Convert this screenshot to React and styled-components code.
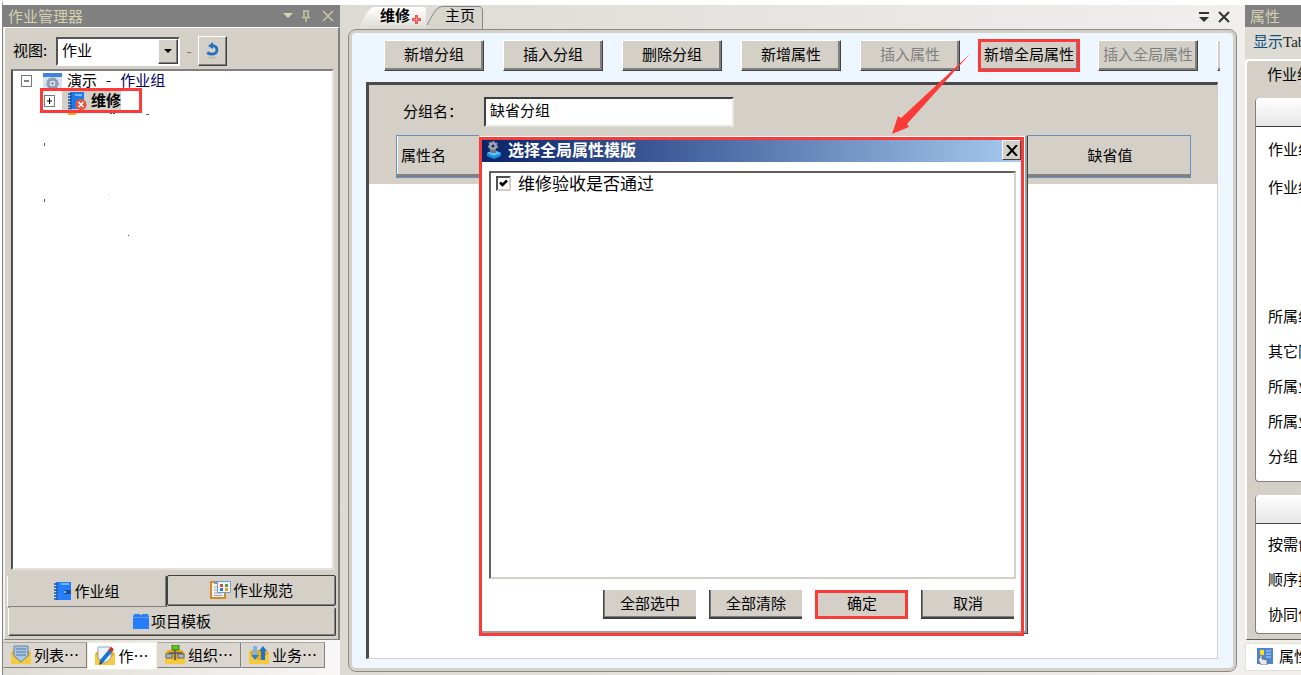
import React from 'react'
import styled, { createGlobalStyle } from 'styled-components'

function App() {
  return (
    <>
    <GlobalStyle />
    <Page lang="zh-CN">
      <Sidebar>
        <PanelTitle>
          <span>作业管理器</span>
          <TitleIcons />
        </PanelTitle>
        <SideBody>
          <ViewRow>
            <label htmlFor="view">视图:</label>
            <Combo>
              <select id="view" defaultValue="job">
                <option value="job">作业</option>
              </select>
              <ComboArrow>
                <svg width="8" height="4"><path d="M0 0h8L4 4z" fill="#000" /></svg>
              </ComboArrow>
            </Combo>
            <Dash>-</Dash>
            <RefreshButton aria-label="刷新">
              <svg width="15" height="18" viewBox="0 0 15 18">
                <path d="M7 3.6C10.500 3.500 12.300 5.800 11.900 8.600C11.400 12 6.500 13.500 2.200 10.500" fill="none" stroke="#2271c3" strokeWidth="2.800" />
                <path d="M3 4L8 0v7z" fill="#2271c3" />
                <ellipse cx="7" cy="15.500" rx="5" ry="1" fill="#bdbbb6" />
              </svg>
            </RefreshButton>
          </ViewRow>
          <Tree>
            <Marks />
            <TreeRow>
              <Expander open />
              <RootIcon />
              <RootLabel>
                <span>演示</span>
                <span>-</span>
                <Navy>作业组</Navy>
              </RootLabel>
            </TreeRow>
            <TreeRow $child>
              <Expander />
              <Selected>
                <BookErrorIcon />
                <b>维修</b>
              </Selected>
            </TreeRow>
          </Tree>
          <ModeTabs>
            <ModeTab $active><BookIcon />作业组</ModeTab>
            <ModeTab><SpecIcon />作业规范</ModeTab>
          </ModeTabs>
          <ModeTab $wide><BoxIcon />项目模板</ModeTab>
        </SideBody>
        <DockTabs>
          <DockTab $w={84}><EnvelopeIcon kind="list" />列表…</DockTab>
          <DockTab $w={70} $active><EnvelopeIcon kind="pen" />作…</DockTab>
          <DockTab $w={84}><EnvelopeIcon kind="org" />组织…</DockTab>
          <DockTab $w={84}><EnvelopeIcon kind="flow" />业务…</DockTab>
        </DockTabs>
      </Sidebar>

      <Main>
        <PageTabs>
          <TabShapes />
          <PageTab $active>维修<RedPlus /></PageTab>
          <PageTab>主页</PageTab>
          <WindowTools>
            <IconButton aria-label="标签列表">
              <svg width="10" height="11"><path d="M0 0h10v2H0zM0 5h10L5 10z" fill="#333" /></svg>
            </IconButton>
            <IconButton aria-label="关闭标签">
              <svg width="12" height="12"><path d="M1 1L11 11M11 1L1 11" stroke="#333" strokeWidth="2" /></svg>
            </IconButton>
          </WindowTools>
        </PageTabs>
        <Frame>
          <Toolbar>
            <ToolButton>新增分组</ToolButton>
            <ToolButton>插入分组</ToolButton>
            <ToolButton>删除分组</ToolButton>
            <ToolButton>新增属性</ToolButton>
            <ToolButton disabled>插入属性</ToolButton>
            <ToolButton $marked>新增全局属性</ToolButton>
            <ToolButton disabled>插入全局属性</ToolButton>
            <ToolButton aria-label="更多" />
          </Toolbar>
          <Editor>
            <GroupForm>
              <NameRow>
                <label htmlFor="group">分组名：</label>
                <input id="group" defaultValue="缺省分组" />
              </NameRow>
              <AttrTable>
                <thead>
                  <tr>
                    <th>属性名</th>
                    <th>缺省值</th>
                  </tr>
                </thead>
              </AttrTable>
            </GroupForm>
            <Dialog role="dialog" aria-labelledby="dialog-title">
              <DialogTitle>
                <GearUserIcon />
                <h2 id="dialog-title">选择全局属性模版</h2>
                <CloseButton aria-label="关闭">
                  <svg width="12" height="11"><path d="M1 0L11 11M11 0L1 11" stroke="#000" strokeWidth="2" /></svg>
                </CloseButton>
              </DialogTitle>
              <CheckList>
                <CheckItem>
                  <Check>
                    <input type="checkbox" defaultChecked />
                    <svg width="11" height="11"><path d="M2 4.500L4.500 7L9 2.500" fill="none" stroke="#000" strokeWidth="2.500" /></svg>
                  </Check>
                  维修验收是否通过
                </CheckItem>
              </CheckList>
              <DialogButtons>
                <DialogButton>全部选中</DialogButton>
                <DialogButton>全部清除</DialogButton>
                <DialogButton $marked>确定</DialogButton>
                <DialogButton>取消</DialogButton>
              </DialogButtons>
            </Dialog>
            <Arrow width="78" height="80" viewBox="892 54 78 80">
              <path d="M892 134L898 116L901 118L970 54L907 124L909 127Z" fill="#fc3a38" />
            </Arrow>
          </Editor>
        </Frame>
      </Main>

      <Properties>
        <PanelTitle><span>属性</span></PanelTitle>
        <ShowTab><span>显示</span>Tab</ShowTab>
        <PropBody>
          <PropHead>作业组</PropHead>
          <PropGroup $grow>
            <GroupBar />
            <Field $h={38}>作业组</Field>
            <Field $h={38} $grow>作业组</Field>
            <Field>所属组</Field>
            <Field>其它限制</Field>
            <Field>所属业务</Field>
            <Field>所属业务</Field>
            <Field>分组</Field>
          </PropGroup>
          <PropGroup>
            <GroupBar />
            <Field>按需创建</Field>
            <Field>顺序执行</Field>
            <Field>协同作业</Field>
          </PropGroup>
        </PropBody>
        <PropTab><PropIcon />属性</PropTab>
      </Properties>
    </Page>
    </>
  )
}

export default App

function TitleIcons() {
  return (
    <svg width="52" height="14" viewBox="0 0 52 14">
      <path d="M0 4h10L5 9z" fill="#d8d3b4" />
      <path d="M20 2h6M21 2v6M25 2v6M19 8.500h8M23 9v4" fill="none" stroke="#c9c4a4" strokeWidth="1.500" />
      <path d="M40 2L50 12M50 2L40 12" stroke="#c9c4a4" strokeWidth="1.500" />
    </svg>
  )
}

function Expander({ open }) {
  return (
    <svg width="11" height="12" viewBox="0 0 11 12">
      <rect x=".5" y=".5" width="10" height="11" fill="#fff" stroke="#777" />
      <path d="M3 6h5" stroke="#000" />
      {!open && <path d="M5.500 3v6" stroke="#000" />}
    </svg>
  )
}

function RootIcon() {
  return (
    <svg width="19" height="17" viewBox="0 0 19 17">
      <path d="M0 0h19v17H0z" fill="#d5e3f1" />
      <path d="M0 0h19v4H0z" fill="#3f83dd" />
      <circle cx="9.500" cy="10.500" r="5.500" fill="#8c9fb3" stroke="#8c9fb3" strokeWidth="1.500" strokeDasharray="2 1" />
      <circle cx="9.500" cy="10.500" r="2.800" fill="#e9f1f8" />
      <path d="M7.500 10.500h4M9.500 8.500v4" stroke="#7d93aa" />
    </svg>
  )
}

function BookIcon() {
  return (
    <svg width="18" height="18" viewBox="0 0 18 18">
      <path d="M2 0h15v18H2z" fill="#257dfc" />
      <path d="M0 2h4M0 5h4M0 8h4M0 11h4M0 14h4M0 17h4" stroke="#1b559f" strokeWidth="1.500" />
      <path d="M7 1h8v2H7z" fill="#79b2ff" />
      <path d="M10 8h7v4h-7z" fill="#1a4f99" />
      <circle cx="11" cy="10" r="1" fill="#b7d6ff" />
    </svg>
  )
}

function BookErrorIcon() {
  return (
    <svg width="20" height="18" viewBox="0 0 20 18">
      <path d="M3 0h14v17H3z" fill="#1e7ae8" />
      <path d="M1 2h4M1 5h4M1 8h4M1 11h4M1 14h4M1 16.500h4" stroke="#174f94" strokeWidth="1.500" />
      <path d="M8 2h7v2H8z" fill="#7eb8f7" />
      <circle cx="14" cy="12.500" r="5.500" fill="#e8573f" />
      <path d="M11.500 10l5 5M16.500 10l-5 5" stroke="#fff" strokeWidth="1.500" />
    </svg>
  )
}

function SpecIcon() {
  return (
    <svg width="21" height="19" viewBox="0 0 21 19">
      <path d="M1 2h14v16H1z" fill="#f4f1e8" stroke="#d28a2d" strokeWidth="2" />
      <path d="M4 1h7v3H4z" fill="#8b98a5" />
      <path d="M4 7h3M4 10h3M4 13h8M4 15.500h8" stroke="#9aa6b3" />
      <path d="M7.500 1.500h13v11h-13z" fill="#eef4fa" stroke="#6f9fce" />
      <path d="M10 4h3v3h-3z" fill="#c8503a" />
      <path d="M15 4h3v3h-3z" fill="#52a32f" />
      <path d="M10 8h3v3h-3z" fill="#2f74cf" />
      <path d="M15 8h3v3h-3z" fill="#e4a21d" />
    </svg>
  )
}

function BoxIcon() {
  return (
    <svg width="16" height="16" viewBox="0 0 16 16">
      <path d="M0 3L1.500 1h5l1 1h1l1-1h5L16 3v13H0z" fill="#257dfc" />
      <path d="M0 4.500h16" stroke="#5c9dfb" />
    </svg>
  )
}

function EnvelopeIcon({ kind }) {
  return (
    <svg width="20" height="20" viewBox="0 0 20 20">
      <path d="M0 8l3-3h14l3 3v11H0z" fill="#e9ab17" />
      <path d="M0 8l10 8L20 8v11H0z" fill="#f7c93c" />
      {kind === 'list' && (
        <g>
          <path d="M3 1h14v10l-7 6l-7-6z" fill="#a9c6e2" stroke="#6584a5" />
          <path d="M5 4h10M5 7h10M5 10h10" stroke="#52769c" />
        </g>
      )}
      {kind === 'pen' && (
        <g>
          <path d="M3 1h13v11l-6 5l-7-5z" fill="#eef3f8" stroke="#8ba3bb" />
          <path d="M6 16L16 4" stroke="#1876d2" strokeWidth="4" />
          <path d="M15 5l2.500-3" stroke="#d6341f" strokeWidth="4" />
          <path d="M4 19l1-4l3 2z" fill="#274b70" />
        </g>
      )}
      {kind === 'org' && (
        <g>
          <path d="M7 0h7v5H7z" fill="#65c51f" stroke="#3b7b14" />
          <path d="M10 5v10M4 8h13M4 8v3M17 8v3" stroke="#4c5560" strokeWidth="1.500" />
          <path d="M1 9h6v4H1zM13 9h6v4h-6z" fill="#a9b8c6" stroke="#596878" />
        </g>
      )}
      {kind === 'flow' && (
        <g>
          <path d="M6 1v10" stroke="#78b6ea" strokeWidth="4" />
          <path d="M2 10h8l-4 5z" fill="#2b83d2" />
          <path d="M14 15V6" stroke="#1d74c9" strokeWidth="4" />
          <path d="M10 6h8l-4-5z" fill="#1d74c9" />
        </g>
      )}
    </svg>
  )
}

function PropIcon() {
  return (
    <svg width="16" height="17" viewBox="0 0 16 17">
      <path d="M0 0h16v16H0z" fill="#4c86d1" />
      <path d="M9 3h5M9 6h5M9 9h5" stroke="#b8d5f5" />
      <path d="M3 2h4v5H3z" fill="#ffe21f" />
      <path d="M4 17l-3-6l2-1V7h2v4l5 1v5z" fill="#e8e8e8" stroke="#5b6270" strokeWidth=".7" />
    </svg>
  )
}

function GearUserIcon() {
  return (
    <svg width="16" height="18" viewBox="0 0 16 18">
      <path d="M1 12l7-3l7 3v3l-7 3l-7-3z" fill="#188fdc" />
      <path d="M1 12l7-3l7 3l-7 3z" fill="#5cc3f6" />
      <circle cx="7" cy="5" r="2.800" fill="none" stroke="#a2a6ac" strokeWidth="2.500" />
      <circle cx="7" cy="5" r="4.500" fill="none" stroke="#8e939b" strokeWidth="1.500" strokeDasharray="2 2" />
      <path d="M5 9h5v3H5z" fill="#6f7680" />
    </svg>
  )
}

function RedPlus() {
  return (
    <svg width="9" height="9" viewBox="0 0 9 9">
      <path d="M3 0h3v3h3v3H6v3H3V6H0V3h3z" fill="#f2545b" />
      <path d="M4.500 2v5M2 4.500h5" stroke="#fff" strokeWidth=".3" />
    </svg>
  )
}

function TabShapes() {
  return (
    <TabArt width="140" height="25" viewBox="0 0 140 25">
      <defs>
        <linearGradient id="tab" x1="0" y1="0" x2="0" y2="1">
          <stop offset="0" stopColor="#fff" />
          <stop offset="1" stopColor="#dedbd4" />
        </linearGradient>
      </defs>
      <path d="M9 24C16 16 18 4 26 2H76Q78 2 78 6V24z" fill="url(#tab)" />
      <path d="M79 20C86 8 88 1 96 1.500H130Q134.500 1.500 134.500 6V24H79z" fill="#d8d5cc" />
      <path d="M79 20C86 8 88 1 96 1.500H130Q134.500 1.500 134.500 6V24" fill="none" stroke="#858585" />
    </TabArt>
  )
}

function Marks() {
  return (
    <TreeMarks width="170" height="130" viewBox="13 110 170 130">
      <path d="M68 112h11l-4 3h-7z" fill="#f0a92d" />
      <path d="M110 113h2v1h-2zM113 113h2v1h-2zM146 114h3v1h-3zM44 143h1v3h-1zM44 199h1v3h-1zM128 235h1v1h-1z" fill="#555" />
      <path d="M108 194h1v1h-1z" fill="#ffc35c" />
    </TreeMarks>
  )
}

const GlobalStyle = createGlobalStyle`
  *,*::before,*::after{
    box-sizing:border-box;
  }
  body{
    margin:0;
    background:#fff;
    overflow:hidden;
  }
  button,input,select{
    font:inherit;
    color:inherit;
    margin:0;
    padding:0;
    border-radius:0;
  }
  svg{
    flex:none;
    display:block;
  }
`

const Page = styled.div`
  min-height:100vh;
  margin-left:2px;
  border-top:5px solid #fff;
  border-left:1px solid #808080;
  display:grid;
  grid-template-columns:337px minmax(0,1fr) 56px;
  column-gap:8px;
  background:linear-gradient(90deg,#d6d2ca,#f0efee 95%);
  color:#000;
  font-family:"Noto Sans CJK SC",sans-serif;
  font-size:15px;
  font-weight:400;
  line-height:20px;
  white-space:nowrap;
`

const Sidebar = styled.aside`
  display:flex;
  flex-direction:column;
`

const PanelTitle = styled.div`
  height:22px;
  padding:0 5px;
  background:#808080;
  color:#d4d0b0;
  display:flex;
  align-items:center;
  justify-content:space-between;
`

const SideBody = styled.div`
  flex:1;
  display:flex;
  flex-direction:column;
  padding:8px 2px 3px;
  background:#d4d0c8;
  border-top:1px solid #fff;
  border-left:2px solid #f4f3f0;
  border-right:2px solid #808080;
  border-bottom:1px solid #808080;
`

const ViewRow = styled.div`
  height:30px;
  margin-bottom:3px;
  padding-left:6px;
  display:flex;
  align-items:center;

  label{
    width:39px;
    padding-bottom:2px;
  }
`

const Combo = styled.div`
  width:124px;
  height:29px;
  margin-left:4px;
  position:relative;
  border:2px solid;
  border-color:#555 #fff #fff #555;
  background:#fff;

  select{
    appearance:none;
    display:block;
    width:100%;
    height:100%;
    border:none;
    background:#fff;
    padding:0 0 2px 4px;
  }
`

const ComboArrow = styled.span`
  position:absolute;
  top:0;
  right:0;
  bottom:0;
  width:20px;
  display:flex;
  align-items:center;
  justify-content:center;
  pointer-events:none;
  background:#d4d0c8;
  border:1px solid;
  border-color:#fff #404040 #404040 #fff;
  box-shadow:inset -1px -1px 0 #808080;
`

const Dash = styled.span`
  width:18px;
  text-align:center;
  color:#777;
`

const RefreshButton = styled.button`
  width:29px;
  height:30px;
  display:flex;
  align-items:center;
  justify-content:center;
  background:#d4d0c8;
  border:1px solid;
  border-color:#fff #404040 #404040 #fff;
  box-shadow:inset -1px -1px 0 #808080;
`

const Tree = styled.div`
  flex:1;
  position:relative;
  margin:0 2px 5px 4px;
  background:#fff;
  border:2px solid;
  border-color:#808080 #e4e1db #e4e1db #505050;
`

const TreeMarks = styled.svg`
  position:absolute;
  left:0;
  top:39px;
`

const TreeRow = styled.div`
  position:relative;
  height:20px;
  display:flex;
  align-items:center;
  gap:${p => p.$child ? '7px' : '11px'};
  padding-left:${p => p.$child ? '31px' : '8px'};

  &::after{
    content:"";
    display:${p => p.$child ? 'block' : 'none'};
    position:absolute;
    left:27px;
    top:-3px;
    width:102px;
    height:25px;
    border:3px solid #fc3a38;
  }
`

const RootLabel = styled.span`
  display:flex;
  gap:9px;
  margin-left:-6px;
  padding-bottom:2px;
`

const Navy = styled.span`
  color:#000066;
`

const Selected = styled.span`
  display:flex;
  align-items:center;
  gap:4px;
  padding-left:5px;
  background:#d4d0c8;

  b{
    padding-bottom:2px;
    font-weight:700;
    line-height:18px;
  }
`

const ModeTabs = styled.div`
  display:grid;
  grid-template-columns:160px 1fr;
  align-items:start;
  height:32px;
`

const ModeTab = styled.button`
  height:${p => p.$active ? '33px' : p.$wide ? '29px' : '31px'};
  margin-left:${p => p.$wide ? '1px' : '0'};
  padding-bottom:2px;
  display:flex;
  align-items:center;
  justify-content:center;
  gap:2px;
  background:#d4d0c8;
  border:1px solid;
  border-color:${p => p.$active || p.$wide ? '#d4d0c8 #404040 #404040 #fff' : '#404040'};
  box-shadow:inset -1px -1px 0 #808080;
  border-radius:2px;
  flex:none;
`

const DockTabs = styled.div`
  height:35px;
  padding-top:2px;
  display:flex;
  align-items:flex-start;
  background:linear-gradient(90deg,#dedbd4,#f8f7f6);
`

const DockTab = styled.button`
  width:${p => p.$w}px;
  height:${p => p.$active ? '28px' : '26px'};
  display:flex;
  align-items:center;
  justify-content:center;
  gap:3px;
  background:${p => p.$active ? '#fff' : '#dbd7d0'};
  border:1px solid;
  border-color:${p => p.$active ? '#f2f0dd' : '#a8a6a3 #808080 #808080 #dbd7d0'};
`

const Main = styled.main`
  display:flex;
  flex-direction:column;
  min-width:0;
  padding-bottom:3px;
`

const PageTabs = styled.div`
  position:relative;
  height:24px;
  display:flex;
  align-items:center;
`

const TabArt = styled.svg`
  position:absolute;
  left:0;
  top:0;
`

const PageTab = styled.button`
  position:relative;
  height:24px;
  padding:0 0 4px ${p => p.$active ? '32px' : '24px'};
  display:flex;
  align-items:center;
  gap:2px;
  border:none;
  background:none;
  font-weight:${p => p.$active ? 700 : 400};

  svg{
    margin-top:8px;
  }
`

const WindowTools = styled.div`
  margin-left:auto;
  padding-right:7px;
  display:flex;
  align-items:center;
  gap:9px;
`

const IconButton = styled.button`
  border:none;
  background:none;
`

const Frame = styled.section`
  flex:1;
  display:flex;
  flex-direction:column;
  padding:9px 18px 12px 17px;
  background:#eef6ff;
  border:1px solid #8a8a8a;
  border-radius:8px;
  box-shadow:inset 0 0 0 3px #d4d0c8;
`

const Toolbar = styled.div`
  display:flex;
  gap:19px;
  margin-right:-2px;
  margin-bottom:10px;
  padding:1px 0 1px 18px;
  overflow:hidden;
`

const ToolButton = styled.button`
  flex:none;
  width:100px;
  height:31px;
  padding-bottom:3px;
  background:#d4d0c8;
  border:1px solid;
  border-color:#fff #404040 #404040 #fff;
  box-shadow:inset -2px -2px 0 #808080;
  outline:${p => p.$marked ? '3px solid #fc3a38' : 'none'};
  outline-offset:-2px;

  &:disabled{
    color:#808080;
  }
`

const Editor = styled.div`
  flex:1;
  position:relative;
  background:#fff;
  border-style:solid;
  border-width:3px 1px 1px 3px;
  border-color:#4a4a4a #d4d0c8 #d4d0c8 #4a4a4a;
`

const GroupForm = styled.div`
  padding:12px 26px 6px 27px;
  background:#d4d0c8;
`

const NameRow = styled.div`
  height:30px;
  margin-bottom:8px;
  padding-left:7px;
  display:flex;
  align-items:center;

  label{
    width:81px;
    padding-bottom:2px;
  }
  input{
    width:250px;
    height:30px;
    padding:0 4px 6px;
    background:#fff;
    border:2px solid;
    border-color:#404040 #e8e6e2 #e8e6e2 #404040;
    outline:none;
  }
`

const AttrTable = styled.table`
  width:100%;
  height:43px;
  border-collapse:separate;
  border-spacing:0;
  border:1px solid #6b8fb8;
  box-shadow:inset 0 -3px 0 #808080, inset 1px 0 0 #fff;

  th{
    padding:0 4px 3px;
    font-weight:400;
    text-align:left;
  }
  th:last-child{
    width:160px;
    text-align:center;
  }
`

const Dialog = styled.div`
  position:absolute;
  left:110px;
  top:50px;
  width:549px;
  height:499px;
  display:flex;
  flex-direction:column;
  padding:4px 4px 14px 2px;
  background:#fff;
  border:1px solid;
  border-color:#d4d0c8 #404040 #404040 #d4d0c8;
  box-shadow:inset -2px -2px 0 #a09e9a;

  &::after{
    content:"";
    position:absolute;
    left:-1px;
    top:1px;
    right:3px;
    bottom:-3px;
    border:3px solid #fc3a38;
    pointer-events:none;
  }
`

const DialogTitle = styled.div`
  height:22px;
  padding:0 2px 2px 4px;
  display:flex;
  align-items:center;
  gap:6px;
  background:linear-gradient(90deg,#0a246a,#a6caf0);

  h2{
    flex:1;
    margin:0;
    padding-bottom:2px;
    color:#fff;
    font-size:16px;
    font-weight:700;
  }
`

const CloseButton = styled.button`
  width:19px;
  height:20px;
  display:flex;
  align-items:center;
  justify-content:center;
  background:#d4d0c8;
  border:1px solid;
  border-color:#fff #404040 #404040 #fff;
`

const CheckList = styled.div`
  flex:1;
  margin:9px 7px 11px;
  padding:0 5px;
  border:2px solid;
  border-color:#606060 #d4d0c8 #d4d0c8 #606060;
`

const CheckItem = styled.label`
  display:flex;
  align-items:center;
  gap:7px;
  font-size:17px;
`

const Check = styled.span`
  position:relative;
  width:15px;
  height:15px;

  input{
    appearance:none;
    display:block;
    width:15px;
    height:15px;
    background:#fff;
    border:2px solid;
    border-color:#505050 #d4d0c8 #d4d0c8 #505050;
  }
  svg{
    position:absolute;
    left:2px;
    top:2px;
    pointer-events:none;
  }
`

const DialogButtons = styled.div`
  display:flex;
  justify-content:flex-end;
  gap:13px;
  padding-right:9px;
`

const DialogButton = styled.button`
  width:93px;
  height:29px;
  padding-bottom:2px;
  background:#d4d0c8;
  border-style:solid;
  border-width:0 0 2px 1px;
  border-color:#404040;
  box-shadow:inset 1px -1px 0 #808080;
  outline:${p => p.$marked ? '3px solid #fc3a38' : 'none'};
  outline-offset:-3px;
`

const Arrow = styled.svg`
  position:absolute;
  left:523px;
  top:-31px;
  pointer-events:none;
`

const Properties = styled.aside`
  display:flex;
  flex-direction:column;
  overflow:hidden;
`

const ShowTab = styled.div`
  height:32px;
  padding:5px 8px;
  background:#dedbd4;
  color:#222;
  font-family:"Liberation Serif","Noto Sans CJK SC",serif;

  span{
    color:#10507c;
  }
`

const PropBody = styled.div`
  flex:1;
  display:flex;
  flex-direction:column;
  width:90px;
  padding:3px 0 5px 8px;
  background:#d4d0c8;
  border-top:2px solid #fff;
  border-left:2px solid #fff;
  border-bottom:1px solid #606060;
  border-radius:5px 0 0 0;
`

const PropHead = styled.div`
  height:34px;
  padding-left:12px;
`

const PropGroup = styled.div`
  flex:${p => p.$grow ? '1' : 'none'};
  display:flex;
  flex-direction:column;
  margin-bottom:${p => p.$grow ? '13px' : '0'};
  padding-bottom:${p => p.$grow ? '7px' : '1px'};
  background:#fff;
  border-left:1px solid #808080;
  border-bottom:1px solid #808080;
  border-radius:4px;
`

const GroupBar = styled.div`
  height:29px;
  margin-bottom:3px;
  background:linear-gradient(#fff,#e6e6e6);
  border-bottom:1px solid #404040;
  border-radius:4px 0 0 0;
`

const Field = styled.div`
  flex:${p => p.$grow ? '1' : 'none'};
  height:${p => p.$h || 35}px;
  padding-left:12px;
  line-height:${p => (p.$h || 35) - 1}px;
`

const PropTab = styled.button`
  height:28px;
  width:90px;
  margin:3px 0 4px;
  padding:0 0 2px 11px;
  display:flex;
  align-items:center;
  gap:6px;
  flex:none;
  background:#fff;
  border:1px solid #e4e1cc;
`
